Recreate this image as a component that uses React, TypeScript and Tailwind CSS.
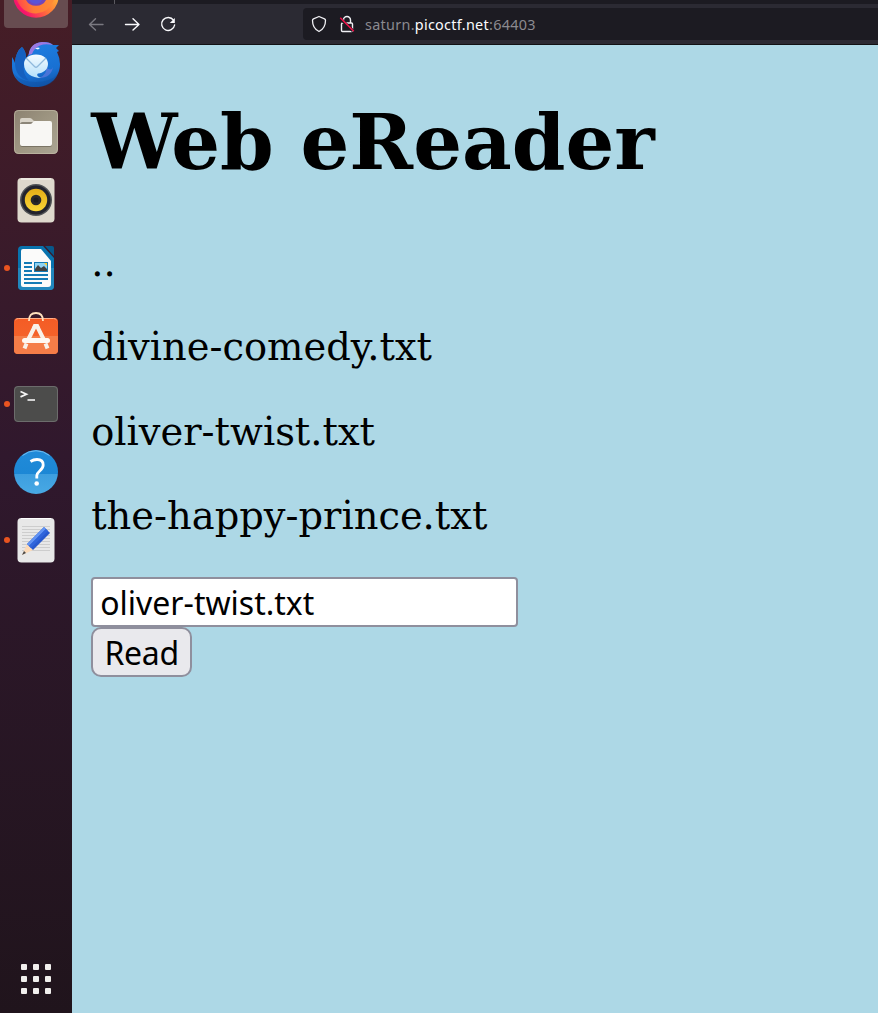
import type { ReactNode } from 'react';

function DockItem({ running = false, label, children }: { running?: boolean; label: string; children: ReactNode }) {
  return (
    <button aria-label={label} className="flex h-[68px] w-[72px] shrink-0 items-center">
      <span className={running ? 'ml-1 size-[6px] shrink-0 rounded-full bg-[#e95420]' : 'ml-1 size-[6px] shrink-0'} />
      <svg className="ml-px size-[50px] shrink-0" viewBox="0 0 50 50" fill="none">
        {children}
      </svg>
    </button>
  );
}

function Firefox() {
  return (
    <div className="flex h-[30px] shrink-0 items-start justify-center">
      <div className="flex h-[28px] w-16 justify-center rounded-b bg-[#674c50]">
        <svg className="h-[28px] w-16" viewBox="4 0 64 28">
          <defs>
            <linearGradient id="fx" gradientUnits="userSpaceOnUse" x1="54" y1="-2" x2="30" y2="19">
              <stop stopColor="#ffa436" />
              <stop offset="0.45" stopColor="#ff7139" />
              <stop offset="1" stopColor="#f5156c" />
            </linearGradient>
            <linearGradient id="fxRing" gradientUnits="userSpaceOnUse" x1="50" y1="0" x2="20" y2="8">
              <stop stopColor="#ff8a35" />
              <stop offset="0.6" stopColor="#ff7a35" />
              <stop offset="1" stopColor="#ff4a4a" />
            </linearGradient>
          </defs>
          <circle cx="36" cy="-5" r="22.800" fill="url(#fx)" />
          <path d="M17 0Q22 13 36 13.500 48 13 54 0Z" fill="url(#fxRing)" />
          <path d="M26 0q3 5.800 10 5.800T46 0Z" fill="#7246b8" />
          <path d="M29 0q3 4 7 4t6-4Z" fill="#5a54d6" />
        </svg>
      </div>
    </div>
  );
}

function Dock() {
  return (
    <nav className="flex h-full w-[72px] shrink-0 flex-col overflow-hidden bg-linear-to-b from-[#461d26] via-[#30182d] via-45% to-[#20141c]">
      <Firefox />
      <DockItem label="Mail">
        <defs>
          <linearGradient id="tb" x1="0.3" y1="0" x2="0.6" y2="1"><stop stopColor="#1f7fe2" /><stop offset="0.7" stopColor="#1870d2" /><stop offset="1" stopColor="#1157ad" /></linearGradient>
          <linearGradient id="env" x2="0" y2="1"><stop stopColor="#f4fbff" /><stop offset="1" stopColor="#b4e0fa" /></linearGradient>
        </defs>
        <path d="M1 18q2 3 3 6 1-12 7-16 4 4 4 11l3-4Q20 3 33 3q6 0 9 3l6 0-3 3 3 3-2 1q3 6 3 12c0 13-10 23-24 23S1 40 1 27Z" fill="url(#tb)" />
        <path d="M11 8q-7 6-7 16 0 14 14 18-7-8-5-16 1-5 2-7 0-7-4-11Z" fill="#1560bf" />
        <path d="M17.500 16Q19 4 31 3q8 0 11 3-8-1.500-13 0.500-6 2.500-8 8.500Z" fill="#9a78e2" />
        <path d="M35 28q2 7-7 11 12 0 14-11-2 5-7 0Z" fill="#5b78dc" opacity="0.75" />
        <path d="M25 15.500c8 0 12 4.500 12 9.500 0 6-5 9-10 9.500-2 1.500 0 3.500 3 4.500-9 0-17-5-17-14 0-5.500 5-9.500 12-9.500Z" fill="url(#env)" />
        <path d="m15 19 8.500 8.500q1.500 1.500 3 0L35 19" stroke="#8fb9dc" strokeWidth="1.300" />
        <path d="m24 9.500 3-1 2 .5-2 1.500Z" fill="#eaf7ff" />
        <path d="M3 35q8 8 22 8t22-8q-5 13-22 13T3 35Z" fill="#0d4a9a" opacity="0.35" />
      </DockItem>
      <DockItem label="Files">
        <defs><linearGradient id="folder" x2="1" y2="1"><stop stopColor="#8c8271" /><stop offset="0.5" stopColor="#9e9682" /><stop offset="1" stopColor="#aaa493" /></linearGradient></defs>
        <rect x="3" y="3" width="44" height="44" rx="4.500" fill="url(#folder)" />
        <rect x="3.500" y="3.500" width="43" height="43" rx="4" stroke="#c5bda9" strokeOpacity="0.65" />
        <path d="M9 13q0-2 2-2h8q1.500 0 2.500 1.500T24 14h2v5H9Z" fill="#d9d4c9" />
        <rect x="9" y="15" width="32" height="25" rx="2.500" fill="#696456" opacity="0.7" />
        <path d="M9 17h10q1.500 0 2.500-1.500T24 14h15q2 0 2 2v21q0 2-2 2H11q-2 0-2-2Z" fill="#f8f7f4" />
      </DockItem>
      <DockItem label="Music">
        <defs><linearGradient id="cone" x2="0" y2="1"><stop stopColor="#e3ad17" /><stop offset="1" stopColor="#f9d635" /></linearGradient></defs>
        <rect x="6.500" y="3" width="37" height="44.500" rx="4" fill="#ded9cd" />
        <path d="M10 4h30" stroke="#f4f2ed" strokeWidth="1.200" />
        <circle cx="25" cy="25" r="16" fill="#505355" />
        <circle cx="25" cy="25" r="14.500" fill="#22242d" />
        <circle cx="25" cy="25" r="11.200" fill="url(#cone)" />
        <circle cx="25" cy="25" r="5.300" fill="#29292b" />
        <circle cx="25" cy="25" r="2.500" fill="#1c1d21" />
      </DockItem>
      <DockItem label="Writer" running>
        <path d="M11 3h21l11 12v28q0 4-4 4H11q-4 0-4-4V7q0-4 4-4Z" fill="#0873ae" />
        <path d="M7 25h36v18q0 4-4 4H11q-4 0-4-4Z" fill="#2187bd" />
        <path d="M34 3h7q2 0 2 2v8Z" fill="#07588b" />
        <path d="M12 6h18l10 12v23q0 3-3 3H12q-2 0-2-2V8q0-2 2-2Z" fill="#fbfbfa" />
        <path d="M13 20h8m-8 4h8m-8 4h8m-8 4h24m-24 4h24m-24 4h18" stroke="#147bb6" strokeWidth="1.900" />
        <rect x="23" y="19" width="14" height="10" fill="#147bb6" />
        <path d="M24 20h12v8H24Z" fill="#90d4f4" />
        <path d="m24 28v-2l3-4 3 3 3-2 3 3v2Z" fill="#424242" />
        <path d="M33 20h3v3Z" fill="#ffcd29" />
      </DockItem>
      <DockItem label="Software">
        <defs><linearGradient id="bag" x2="0" y2="1"><stop stopColor="#f45c25" /><stop offset="1" stopColor="#f5682f" /></linearGradient></defs>
        <rect x="3" y="7" width="44" height="36" rx="4" fill="url(#bag)" />
        <path d="M3 25h44v14q0 4-4 4H7q-4 0-4-4Z" fill="#f57d48" />
        <path d="M4.500 9q1-1.500 3-1.500h35q2 0 3 1.500" stroke="#ffb08b" />
        <path d="M18 10q0-8 7-8t7 8" stroke="#ffe1be" strokeWidth="1.800" />
        <path d="m24 15-7 14m9-14 7 14M15.500 32.500l-2 5m21-5 2 5" stroke="#f8f1e9" strokeWidth="4" />
        <path d="M22.500 13h5l1.500 4h-8Z" fill="#f8f1e9" />
        <rect x="11" y="27" width="28" height="5" rx="2.500" fill="#fff8f2" />
      </DockItem>
      <DockItem label="Terminal" running>
        <rect x="3" y="7" width="44" height="36" rx="4" fill="#4c4c4b" />
        <rect x="3.500" y="7.500" width="43" height="35" rx="3.500" stroke="#777" strokeOpacity="0.75" />
        <path d="m9.500 12.500 6 2.700-6 2.700" stroke="#f4f4f4" strokeWidth="1.700" />
        <path d="M16.500 21h7.500" stroke="#f4f4f4" strokeWidth="1.600" />
      </DockItem>
      <DockItem label="Help">
        <defs><linearGradient id="help" x1="0" y1="0" x2="0" y2="1"><stop stopColor="#218bd9" /><stop offset="0.54" stopColor="#1c87d5" /><stop offset="0.55" stopColor="#3d9edf" /><stop offset="1" stopColor="#48a9e4" /></linearGradient></defs>
        <circle cx="25" cy="25" r="22" fill="url(#help)" />
        <path d="M11.500 8.500A21.500 21.500 0 0 1 38.500 8.500" stroke="#71bdf0" />
        <path d="M19.500 14.500q3-2 6.500-2c4 0 6.200 2.200 6.200 5.500 0 5.500-6.400 6.200-6.400 10.500v3" stroke="#fff" strokeWidth="2.800" />
        <circle cx="25.700" cy="36.500" r="2.300" fill="#fff" />
      </DockItem>
      <DockItem label="Text editor" running>
        <rect x="6.500" y="3" width="37" height="44.500" rx="4" fill="#e8e8e8" />
        <path d="M10 3.500h30" stroke="#fff" />
        <path d="M11 11.500h28m-28 3h28m-28 3h28m-28 3h28m-28 3h28m-28 3h28m-28 3h28m-28 3h28m-28 3h28" stroke="#cdcdcd" />
        <path d="m11 40 5-11 6 6Z" fill="#fbdab9" />
        <path d="m11 40 2-4 2 2Z" fill="#484848" />
        <path d="m16 29 17-17 6 6-17 17Z" fill="#2759ce" />
        <path d="m16 29 17-17 2 2-17 17Z" fill="#6193f4" />
        <path d="m18 31 17-17 2 2-17 17Z" fill="#2f65dc" />
      </DockItem>
      <button aria-label="Applications" className="mt-auto mb-[19px] grid grid-cols-3 gap-[6px] self-center">
        {Array.from({ length: 9 }, (_, i) => <span key={i} className="size-[6px] rounded-[1px] bg-[#f1efed]" />)}
      </button>
    </nav>
  );
}

function BrowserBar() {
  return (
    <header className="h-[45px] shrink-0 border-b border-[#111114] bg-[#2b2a33]">
      <div className="flex h-1 bg-[#1c1b22]"><span className="ml-[42px] w-px bg-[#5b5a60]" /></div>
      <div className="flex h-10 items-center">
        <svg className="ml-4 h-4 w-[92px] shrink-0" viewBox="0 0 92 16" fill="none" strokeWidth="1.400" strokeLinecap="round" strokeLinejoin="round">
          <path d="M15 8.500H1.500m6-5.700L1.500 8.500l6 5.500" stroke="#7a7981" />
          <path d="M37.500 8.500H51m-6-5.700 6 5.700-6 5.500" stroke="#fbfbfe" />
          <path d="M85.500 4.200A6.500 6.500 0 1 0 86.600 9" stroke="#fbfbfe" />
          <path d="M86.800 2v5h-5Z" fill="#fbfbfe" />
        </svg>
        <div className="ml-[123px] flex h-8 flex-1 items-center rounded-l bg-[#1c1b22]">
          <svg className="ml-2 h-[18px] w-11 shrink-0" viewBox="0 0 44 18" fill="none" strokeLinejoin="round">
            <path d="m8 1.500 5.500 2.300q1 .4 1 1.700c0 5-1.500 8.500-6.500 11-5-2.500-6.500-6-6.500-11q0-1.300 1-1.700Z" stroke="#f0f0f4" strokeWidth="1.300" />
            <path d="M32.500 7.500V5a3.500 3.500 0 0 1 7 0v2.500M31.500 8h9q1 0 1 1v6.500q0 1-1 1h-9q-1 0-1-1V9q0-1 1-1Z" stroke="#f0f0f4" strokeWidth="1.400" />
            <path d="m28.500 2.800 13.500 13" stroke="#1c1b22" strokeWidth="3" />
            <path d="m29.300 2.800 13.500 13.400" stroke="#f5124a" strokeWidth="1.500" />
          </svg>
          <span className="ml-[10px] pt-[2px] whitespace-nowrap font-['Noto_Sans',sans-serif] text-[14.400px] leading-5 tracking-[0.290px] text-[#8b8a90]">
            saturn.<span className="text-[#fbfbfe]">picoctf.net</span>:64403
          </span>
        </div>
      </div>
    </header>
  );
}

export default function App() {
  return (
    <div className="flex h-[1013px] overflow-hidden">
      <Dock />
      <div className="flex min-w-0 flex-1 flex-col">
        <BrowserBar />
        <main className="flex-1 bg-[#add8e6] px-[19.200px] pt-[52px] font-['DejaVu_Serif',serif] text-[38.400px] leading-[45px] text-black">
          <h1 className="text-[76.800px] leading-[90px] font-bold">Web eReader</h1>
          <div className="mt-[53px] flex flex-col gap-[39.400px]">
            <p>..</p>
            <p>divine-comedy.txt</p>
            <p>oliver-twist.txt</p>
            <p>the-happy-prince.txt</p>
          </div>
          <form className="mt-[39px] flex flex-col items-start font-['Noto_Sans',sans-serif] text-[32px]" onSubmit={(e) => e.preventDefault()}>
            <input className="h-[50px] w-[427px] rounded-[4px] border-2 border-[#8f8f9d] bg-white px-[7px] outline-none" defaultValue="oliver-twist.txt" aria-label="Book" />
            <button className="h-[50px] w-[101px] rounded-[10px] border-2 border-[#8f8f9d] bg-[#e9e9ed] pt-px leading-[46px] tracking-[-0.300px]">Read</button>
          </form>
        </main>
      </div>
    </div>
  );
}
